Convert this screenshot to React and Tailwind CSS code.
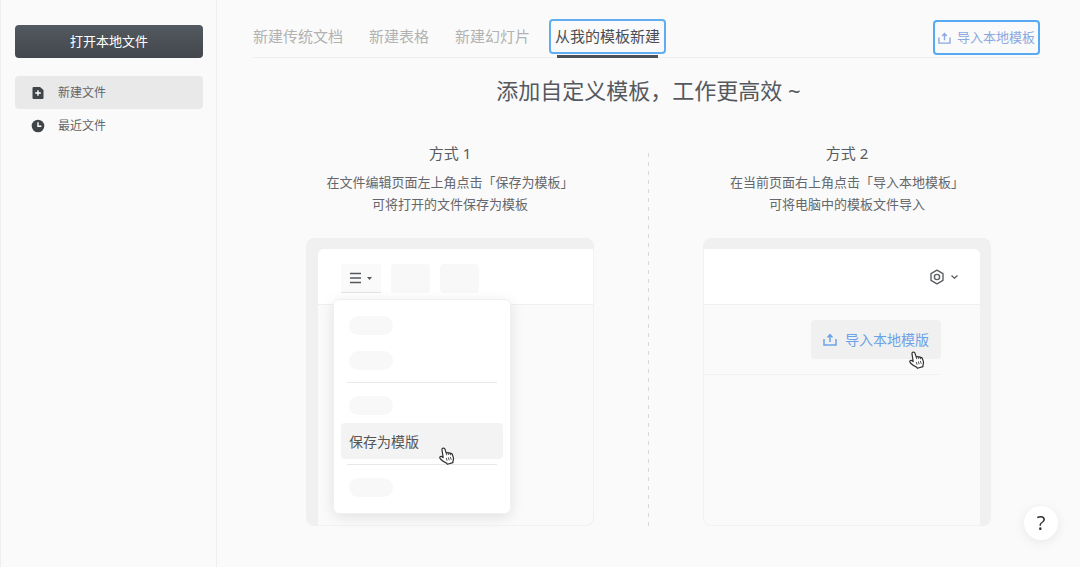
import React from "react";

const tabs = ["新建传统文档", "新建表格", "新建幻灯片", "从我的模板新建"];

function UploadIcon({ className }) {
    return (
        <svg className={className} viewBox="0 0 14 13" fill="none" stroke="currentColor" aria-hidden="true">
            <path d="M1 6v6h12V6M7 9V2M4.5 4.4 7 1.6l2.5 2.8" strokeWidth="1.5" />
        </svg>
    );
}

function HandIcon({ className }) {
    return (
        <svg className={className} viewBox="0 0 17 19" aria-hidden="true">
            <path
                d="M4.3 1.2c.9-.4 1.7.1 2 1l1.3 4c.7-.6 1.7-.5 2.2.3.7-.5 1.8-.3 2.2.5.9-.5 1.9 0 2.2.9l1 3.1c.5 1.8.1 3.200-.5 4.600l.1 1-5.900 1.700-.8-1.300C5.900 16.300 3.800 15 1.800 13c-.9-1-1.300-1.900-.7-2.600.8-.8 1.900-.4 3.300.8L3.200 3c-.2-.9.2-1.500 1.100-1.800Z"
                fill="#fff"
                stroke="#333"
                strokeWidth="1.3"
                strokeLinejoin="round"
            />
            <path d="m7.600 6.200.7 2.500m1.500-2.200.6 1.900m1.600-1.400.5 1.700M7.700 11.500l.9 3m1.300-3.500.9 3m1.300-3.500.9 3" fill="none" stroke="#333" strokeWidth="0.9" />
        </svg>
    );
}

function Sidebar() {
    return (
        <aside className="w-[217px] shrink-0 border-x border-[#eeeeee] pl-3.5 pr-[13px] pt-[25px]">
            <button className="block h-[33px] w-full rounded bg-linear-to-b from-[#525960] to-[#44484d] text-[13px] text-white">
                打开本地文件
            </button>
            <nav className="mt-[18px] text-[12px] text-[#63666a]">
                <a href="#new" className="flex h-[33px] items-center gap-[13px] rounded bg-[#e9e9e9] pl-4">
                    <svg className="size-3.5" viewBox="0 0 14 14" aria-hidden="true">
                        <path d="M2.500 1h6.500l3.500 3v8q0 1-1 1h-9q-1 0-1-1V2q0-1 1-1Z" fill="#3f4449" />
                        <path d="M7 4.200v5.600M4.200 7h5.600" stroke="#fff" strokeWidth="1.400" />
                    </svg>
                    新建文件
                </a>
                <a href="#recent" className="flex h-[33px] items-center gap-[13px] pl-4">
                    <svg className="size-3.5" viewBox="0 0 14 14" aria-hidden="true">
                        <circle cx="7" cy="7" r="6.300" fill="#3f4449" />
                        <path d="M7 3.200v4h3.400" fill="none" stroke="#fff" strokeWidth="1.400" />
                    </svg>
                    最近文件
                </a>
            </nav>
        </aside>
    );
}

function Header() {
    return (
        <header className="ml-9 mr-10 flex h-[58px] items-start justify-between border-b border-[#efefef] pt-[19px]">
            <nav className="flex gap-[26px] text-[15px] leading-[35px] text-[#b2b2b2]">
                {tabs.map((tab, index) =>
                    index === tabs.length - 1 ? (
                        <button key={tab} className="relative -ml-[7px] whitespace-nowrap rounded-sm px-1.5 text-[#4b4e52] outline-2 -outline-offset-2 outline-[#62adf0]">
                            {tab}
                            <span className="absolute inset-x-2 top-9 h-[3px] bg-[#4b5057]"></span>
                        </button>
                    ) : (
                        <button key={tab} className="whitespace-nowrap">
                            {tab}
                        </button>
                    )
                )}
            </nav>
            <button className="mt-px flex h-[35px] items-center gap-1.5 whitespace-nowrap rounded-sm border-2 border-[#56a9f3] px-[3px] text-[13px] text-[#8ba8e0]">
                <UploadIcon className="h-3 w-[13px]" />
                导入本地模板
            </button>
        </header>
    );
}

function Way({ title, lines, children }) {
    return (
        <section className="w-[288px] text-center">
            <h2 className="text-[15px] leading-6 text-[#585b60]">{title}</h2>
            <p className="mt-1.5 text-[13px] leading-[22px] text-[#64676b]">
                {lines[0]}
                <br />
                {lines[1]}
            </p>
            {children}
        </section>
    );
}

function SaveAsPreview() {
    return (
        <div className="mt-[23px] h-[288px] rounded-lg bg-[#f0f0f0] pl-3 pt-[11px]">
            <div className="relative h-full rounded-tl-md rounded-br-lg border-b border-r border-[#f2f2f2] bg-[#fafafa]">
                <div className="flex h-14 gap-2.5 rounded-tl-md border-b border-[#efefef] bg-white pl-[23px] pt-[15px]">
                    <div className="flex h-[29px] w-10 items-center justify-center gap-1.5 border-b border-[#e4e4e4] bg-[#fafafa]">
                        <svg className="h-3 w-[11px]" viewBox="0 0 11 12" stroke="#55585c" strokeWidth="1.500" aria-hidden="true">
                            <path d="M0 1.500h11M0 6h11M0 10.500h11" />
                        </svg>
                        <svg className="h-[3px] w-[5px]" viewBox="0 0 5 3" fill="#55585c" aria-hidden="true">
                            <path d="M0 0h5L2.500 3Z" />
                        </svg>
                    </div>
                    <div className="h-[29px] w-[39px] rounded bg-[#f8f8f8]"></div>
                    <div className="h-[29px] w-[39px] rounded bg-[#f8f8f8]"></div>
                </div>
                <div className="absolute left-[15px] top-[50px] w-[178px] rounded-md border border-[#f0f0f0] bg-white px-[7px] py-4 shadow-[0_3px_14px_rgba(0,0,0,0.1)]">
                    <div className="ml-2 h-[19px] w-11 rounded-full bg-[#f8f8f8]"></div>
                    <div className="ml-2 mt-4 h-[19px] w-11 rounded-full bg-[#f8f8f8]"></div>
                    <div className="mx-1.5 mt-3 h-px bg-[#e8e8e8]"></div>
                    <div className="ml-2 mt-[13px] h-[19px] w-11 rounded-full bg-[#f8f8f8]"></div>
                    <button className="relative mt-2 block h-9 w-full rounded bg-[#f3f3f3] pl-2 text-left text-[14px] text-[#555]">
                        保存为模版
                        <HandIcon className="absolute left-[98px] top-6 h-[18px] w-4" />
                    </button>
                    <div className="mx-1.5 mt-[5px] h-px bg-[#e8e8e8]"></div>
                    <div className="ml-2 mt-[13px] h-[19px] w-11 rounded-full bg-[#f8f8f8]"></div>
                </div>
            </div>
        </div>
    );
}

function ImportPreview() {
    return (
        <div className="mt-[23px] h-[288px] rounded-lg bg-[#f0f0f0] pr-[11px] pt-[11px]">
            <div className="h-full rounded-tr-md rounded-bl-lg border-b border-l border-[#f2f2f2] bg-[#fafafa]">
                <div className="flex h-14 items-center justify-end gap-1.5 rounded-tr-md border-b border-[#efefef] bg-white pr-[22px]">
                    <svg className="size-4" viewBox="0 0 16 16" fill="none" stroke="#5c5f63" strokeWidth="1.400" aria-hidden="true">
                        <path d="M8 1.200 14 4.600v6.800L8 14.800 2 11.400V4.600Z" strokeLinejoin="round" />
                        <circle cx="8" cy="8" r="2.600" />
                    </svg>
                    <svg className="h-1 w-[7px]" viewBox="0 0 7 4" fill="none" stroke="#5c5f63" strokeWidth="1.300" aria-hidden="true">
                        <path d="m.5.500 3 2.700 3-2.700" />
                    </svg>
                </div>
                <div className="mr-[39px] flex h-[70px] justify-end border-b border-[#f2f2f2] pt-[15px]">
                    <button className="relative flex h-[39px] w-[130px] items-center justify-center gap-2 rounded bg-[#f0f0f0] text-[14px] text-[#6ca2e8]">
                        <UploadIcon className="h-[13px] w-3.5" />
                        导入本地模版
                        <HandIcon className="absolute left-[98px] top-[31px] h-[18px] w-4" />
                    </button>
                </div>
            </div>
        </div>
    );
}

export default function App() {
    return (
        <div className="flex min-h-screen bg-[#fafafa] font-['Noto_Sans','Noto_Sans_CJK_SC',sans-serif]">
            <Sidebar />
            <main className="min-w-0 flex-1">
                <Header />
                <h1 className="mt-4 text-center text-[22px] leading-8 text-[#55595e]">
                    添加自定义模板，工作更高效 ~
                </h1>
                <div className="mt-[35px] flex justify-center gap-[54px]">
                    <Way title="方式 1" lines={["在文件编辑页面左上角点击「保存为模板」", "可将打开的文件保存为模板"]}>
                        <SaveAsPreview />
                    </Way>
                    <div className="-mb-0.5 mt-3 w-px bg-[repeating-linear-gradient(#d8d8d8_0_4px,transparent_4px_9px)]"></div>
                    <Way title="方式 2" lines={["在当前页面右上角点击「导入本地模板」", "可将电脑中的模板文件导入"]}>
                        <ImportPreview />
                    </Way>
                </div>
            </main>
            <button
                aria-label="帮助"
                className="fixed bottom-[27px] right-[22px] size-[34px] rounded-full bg-white text-[20px] leading-none text-[#333] shadow-[0_2px_12px_rgba(0,0,0,0.08)]"
            >
                ?
            </button>
        </div>
    );
}
